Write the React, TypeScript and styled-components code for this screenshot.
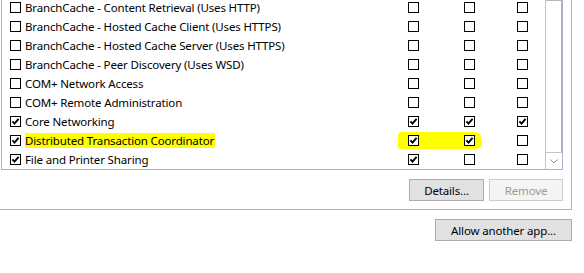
import React from 'react';
import styled, { createGlobalStyle } from 'styled-components';

const GlobalStyle = createGlobalStyle`
  html, body {
    margin: 0;
    padding: 0;
    background: #fff;
    overflow: hidden;
  }
  body {
    font-family: 'Noto Sans', 'Liberation Sans', sans-serif;
    font-size: 11.5px;
    letter-spacing: -0.15px;
    color: #000;
  }
`;

type Rule = {
  name: string;
  checks: [boolean, boolean, boolean, boolean];
  marked?: boolean;
};

const rules: Rule[] = [
  { name: 'BranchCache - Content Retrieval (Uses HTTP)', checks: [false, false, false, false] },
  { name: 'BranchCache - Hosted Cache Client (Uses HTTPS)', checks: [false, false, false, false] },
  { name: 'BranchCache - Hosted Cache Server (Uses HTTPS)', checks: [false, false, false, false] },
  { name: 'BranchCache - Peer Discovery (Uses WSD)', checks: [false, false, false, false] },
  { name: 'COM+ Network Access', checks: [false, false, false, false] },
  { name: 'COM+ Remote Administration', checks: [false, false, false, false] },
  { name: 'Core Networking', checks: [true, true, true, true] },
  { name: 'Distributed Transaction Coordinator', checks: [true, true, true, false], marked: true },
  { name: 'File and Printer Sharing', checks: [true, true, false, false] },
];

const Page = styled.div`
  width: 584px;
  height: 273px;
  display: flex;
  flex-direction: column;
  align-items: flex-start;
`;

const Group = styled.div`
  width: 562px;
  padding: 0 8px 0 1px;
  border-right: 1px solid #acacd6;
  border-bottom: 1px solid #acacd6;
  display: flex;
  flex-direction: column;
`;

const List = styled.div`
  margin-top: -2px;
  display: flex;
  border: 1px solid #acacd6;
  border-top: none;
  background: #fff;
`;

const Rows = styled.div`
  flex: 1;
  padding-left: 8px;
`;

const Row = styled.div`
  position: relative;
  height: 19px;
  display: grid;
  grid-template-columns: 398px 56px 53px 1fr;
  align-items: center;
`;

const Name = styled.div`
  display: flex;
  align-items: center;
  gap: 4px;
  white-space: nowrap;
`;

const Label = styled.span<{ $marked?: boolean }>`
  line-height: 15px;
  padding: 0 1px 0 0;
  background: ${(p) => (p.$marked ? '#ffff00' : 'transparent')};
`;

const Cell = styled.div`
  position: relative;
  z-index: 1;
  display: flex;
`;

const Marker = styled.div`
  position: absolute;
  left: 388px;
  top: 1px;
  width: 84px;
  height: 17px;
  background: #ffff00;
  border-radius: 4px 8px 6px 3px;
`;

const Box = styled.span`
  position: relative;
  z-index: 1;
  width: 11px;
  height: 11px;
  box-sizing: border-box;
  border: 1px solid #000;
  background: #fff;
  display: inline-flex;
  align-items: center;
  justify-content: center;
  flex-shrink: 0;
`;

const Scrollbar = styled.div`
  width: 16px;
  border-left: 1px solid #c4c4c4;
  display: flex;
  flex-direction: column;
`;

const Thumb = styled.div`
  flex: 1;
  margin-top: 2px;
  border-top: 1px solid #b8b8b8;
  border-right: 1px solid #b0b0b0;
`;

const ArrowButton = styled.div`
  height: 16px;
  border-top: 1px solid #c4c4c4;
  display: flex;
  align-items: center;
  justify-content: center;
`;

const ButtonRow = styled.div`
  display: flex;
  justify-content: flex-end;
  gap: 5px;
  padding: 9px 0 8px;
`;

const Button = styled.button<{ $w: number }>`
  width: ${(p) => p.$w}px;
  height: 22px;
  box-sizing: border-box;
  margin: 0;
  padding: 0;
  font-family: inherit;
  font-size: 11.5px;
  letter-spacing: -0.15px;
  color: #000;
  background: #e1e1e1;
  border: 1px solid #adadad;
  &:disabled {
    color: #9a9a9a;
    background: #f4f4f4;
    border-color: #cdcdcd;
  }
`;

const Footer = styled.div`
  width: 572px;
  display: flex;
  justify-content: flex-end;
  padding-top: 9px;
`;

function Check({ on }: { on: boolean }) {
  return (
    <Box>
      {on && (
        <svg width="9" height="9" viewBox="0 0 9 9">
          <path d="M1.4 4.4 L3.5 6.6 L7.6 1.8" fill="none" stroke="#000" strokeWidth="1.9" />
        </svg>
      )}
    </Box>
  );
}

export default function App() {
  return (
    <>
      <GlobalStyle />
      <Page>
        <Group>
          <List>
            <Rows>
              {rules.map((r) => (
                <Row key={r.name}>
                  {r.marked && <Marker />}
                  <Name>
                    <Check on={r.checks[0]} />
                    <Label $marked={r.marked}>{r.name}</Label>
                  </Name>
                  {r.checks.slice(1).map((c, i) => (
                    <Cell key={i}>
                      <Check on={c} />
                    </Cell>
                  ))}
                </Row>
              ))}
            </Rows>
            <Scrollbar>
              <Thumb />
              <ArrowButton>
                <svg width="8" height="5" viewBox="0 0 8 5">
                  <path d="M0.5 0.5 L4 4 L7.5 0.5" fill="none" stroke="#8a8a8a" strokeWidth="1" />
                </svg>
              </ArrowButton>
            </Scrollbar>
          </List>
          <ButtonRow>
            <Button $w={75}>Details...</Button>
            <Button $w={74} disabled>
              Remove
            </Button>
          </ButtonRow>
        </Group>
        <Footer>
          <Button $w={137}>Allow another app...</Button>
        </Footer>
      </Page>
    </>
  );
}
